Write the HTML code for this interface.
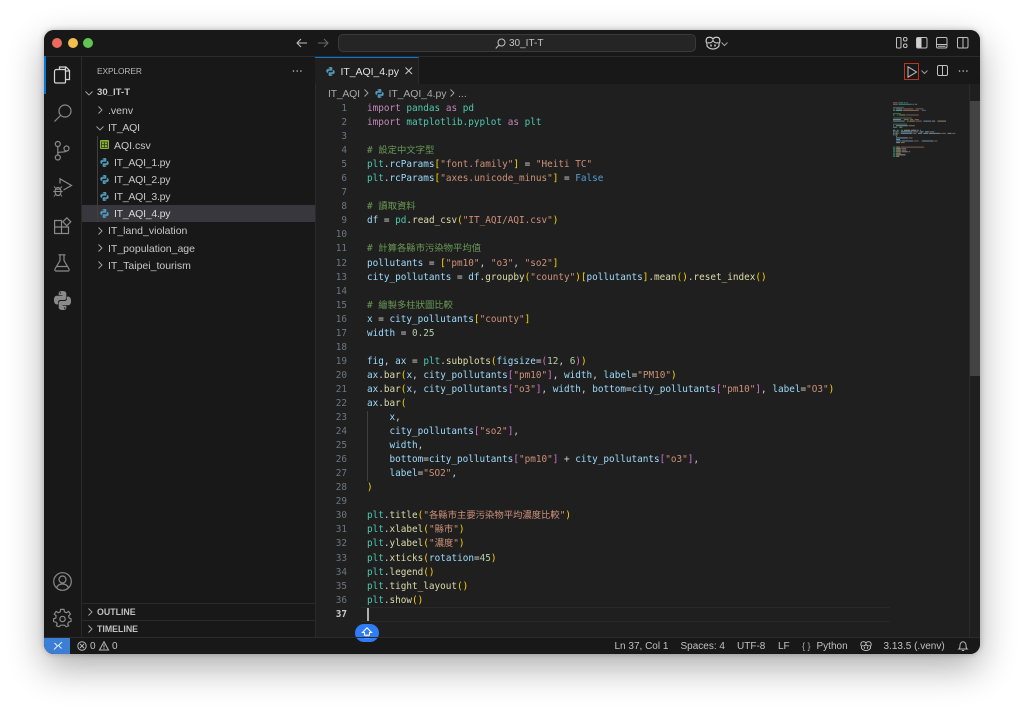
<!DOCTYPE html>
<html lang="en"><head><meta charset="utf-8"><title>30_IT-T</title>
<style>
*{box-sizing:border-box}
html,body{margin:0;width:1024px;height:712px;overflow:hidden;background:#fff}
body{position:relative;font-family:"Liberation Sans","Noto Sans CJK TC",sans-serif}
.win{position:absolute;left:44px;top:30px;width:936px;height:624px;border-radius:10px;background:#181818;box-shadow:0 14px 36px rgba(0,0,0,.32),0 0 6px rgba(0,0,0,.25)}
.a{position:absolute}
svg{position:absolute;overflow:visible;fill:none}
.t{position:absolute;white-space:pre;color:#c8c8c8;font-size:10.5px;line-height:14px}
.fl{letter-spacing:-.25px}
#code,#nums{position:absolute;top:102px;font-family:"DejaVu Sans Mono","Noto Sans CJK TC",monospace;font-size:9.35px}
#code div,#nums div{height:14.05px;line-height:14.05px;white-space:pre}
#code{left:367px;color:#d4d4d4}
#nums{left:320px;width:27px;text-align:right;color:#6e7681}
.k{color:#c586c0}.m{color:#4ec9b0}.v{color:#9cdcfe}.s{color:#ce9178}.f{color:#dcdcaa}.c{color:#6a9955}.n{color:#b5cea8}.y{color:#ffd700}.p{color:#da70d6}.b{color:#569cd6}
</style></head><body>
<svg width="0" height="0" style="position:absolute"><defs>
<g id="py"><path fill="#519aba" d="M7.900 1C5 1 5.100 2.300 5.100 2.300V3.800H8V4.300H3.600S1.500 4 1.500 7.100 3.300 10.100 3.300 10.100H4.400V8.600S4.300 6.800 6.200 6.800H9.100S10.900 6.800 10.900 5.100V2.600S11.200 1 7.900 1ZM6.400 1.900A.5.5 0 1 1 6.400 2.900.5.5 0 0 1 6.400 1.900Z"/><path fill="#519aba" d="M8.100 15C11 15 10.900 13.700 10.900 13.700V12.200H8V11.700H12.400S14.500 12 14.500 8.900 12.700 5.900 12.700 5.900H11.600V7.400S11.700 9.200 9.800 9.200H6.900S5.100 9.200 5.100 10.900V13.400S4.800 15 8.100 15ZM9.600 14.100A.5.5 0 1 1 9.600 13.100.5.5 0 0 1 9.600 14.100Z"/></g>
<path id="cr" d="M.5 .5L4 4 .5 7.500" stroke="#a8a8a8" stroke-width=".9"/>
<path id="cd" d="M.5 .5L4 4 7.500 .5" stroke="#a8a8a8" stroke-width=".9"/>
<g id="cop" stroke="#c8c8c8" stroke-width="1.200"><path d="M2 8.500C.5 7 1 3 3 2.500 5 2 7 2.500 8 4 9 2.500 11 2 13 2.500 15 3 15.500 7 14 8.500V11C12.500 13 10 14 8 14S3.500 13 2 11Z"/><path d="M2.500 7.500C5 8.500 7 7.500 8 5.500 9 7.500 11 8.500 13.500 7.500"/><path d="M6 9.500V11.500M10 9.500V11.500" stroke-width="1.500"/></g>
</defs></svg>

<div class="win"></div>

<div class="a" style="left:44px;top:30px;width:936px;height:624px;border-radius:10px;overflow:hidden;background:#181818">
<div class="a" style="left:-44px;top:-30px;width:1024px;height:712px">

<!-- backgrounds -->
<div class="a" style="left:44px;top:56px;width:936px;height:1px;background:#2b2b2b"></div>
<div class="a" style="left:81px;top:57px;width:1px;height:581px;background:#2b2b2b"></div>
<div class="a" style="left:315px;top:57px;width:1px;height:581px;background:#2b2b2b"></div>
<div class="a" style="left:316px;top:84px;width:664px;height:554px;background:#1f1f1f"></div>
<div class="a" style="left:44px;top:56px;width:2px;height:38px;background:#0078d4"></div>

<!-- traffic lights -->
<div class="a" style="left:52px;top:38px;width:10px;height:10px;border-radius:50%;background:#ed6a5e"></div>
<div class="a" style="left:67.500px;top:38px;width:10px;height:10px;border-radius:50%;background:#f4bf4f"></div>
<div class="a" style="left:83px;top:38px;width:10px;height:10px;border-radius:50%;background:#61c554"></div>

<!-- title bar -->
<svg style="left:296px;top:38px" width="12" height="10"><path d="M11 5H1M5 1L1 5 5 9" stroke="#c0c0c0"/></svg>
<svg style="left:317px;top:38px" width="12" height="10"><path d="M1 5H11M7 1L11 5 7 9" stroke="#6a6a6a"/></svg>
<div class="a" style="left:338px;top:34px;width:358px;height:18px;border-radius:5px;background:#252525;border:1px solid #3a3a3a"></div>
<svg style="left:495px;top:38px" width="11" height="11"><circle cx="6.500" cy="4.500" r="3.500" stroke="#c0c0c0"/><path d="M4 7L.8 10.500" stroke="#c0c0c0"/></svg>
<div class="t" style="left:509px;top:36.500px;font-size:10px;color:#c4c4c4">30_IT-T</div>
<svg style="left:705px;top:35px" width="16" height="16"><use href="#cop"/></svg>
<svg style="left:721px;top:41.500px" width="8" height="5"><path d="M.5.500L3.500 3.500 6.500.500" stroke="#a0a0a0"/></svg>

<svg style="left:896px;top:37px" width="12" height="12"><rect x=".5" y=".5" width="4.500" height="10.500" rx="1" stroke="#c0c0c0"/><rect x="7.500" y=".5" width="3.500" height="3.500" rx="1.500" stroke="#c0c0c0"/><rect x="7.500" y="7" width="3.500" height="3.500" rx="1.500" stroke="#c0c0c0"/></svg>
<svg style="left:916px;top:37px" width="12" height="12"><rect x=".5" y=".5" width="10.500" height="10.500" rx="1.500" stroke="#c0c0c0"/><rect x="1" y="1" width="4.500" height="9.500" fill="#d0d0d0"/></svg>
<svg style="left:936px;top:37px" width="12" height="12"><rect x=".5" y=".5" width="10.500" height="10.500" rx="1.500" stroke="#c0c0c0"/><path d="M.5 7.500H11M2 9.200H9.500" stroke="#c0c0c0"/></svg>
<svg style="left:956.500px;top:37px" width="12" height="12"><rect x=".5" y=".5" width="10.500" height="10.500" rx="1.500" stroke="#c0c0c0"/><path d="M6 .5V11" stroke="#c0c0c0"/></svg>

<!-- activity bar -->
<svg style="left:53px;top:66px" width="18" height="18"><path d="M6.500 3.500V1H13L16.500 4.500V13.500H12.500" stroke="#d4d4d4" stroke-width="1.200"/><path d="M12.500 1V5H16.500" stroke="#d4d4d4" stroke-width="1.200"/><path d="M1.500 5.500C1.500 4 2.500 3.500 3.500 3.500H11.500C12 3.500 12.500 4 12.500 4.500V16C12.500 16.500 12 17 11.500 17H3C2 17 1.500 16.500 1.500 15.500Z" stroke="#d4d4d4" stroke-width="1.200"/></svg>
<svg style="left:53.500px;top:104px" width="18" height="18"><circle cx="11" cy="7" r="6" stroke="#8a8a8a" stroke-width="1.200"/><path d="M6.500 11.500L.5 17.500" stroke="#8a8a8a" stroke-width="1.200"/></svg>
<svg style="left:54px;top:141px" width="16" height="20"><circle cx="3.800" cy="3" r="2.500" stroke="#8a8a8a" stroke-width="1.200"/><circle cx="3.800" cy="16.500" r="2.500" stroke="#8a8a8a" stroke-width="1.200"/><circle cx="12.500" cy="7.500" r="2.500" stroke="#8a8a8a" stroke-width="1.200"/><path d="M3.800 5.500V14M3.800 12.500C4 10 11 12 12.500 10" stroke="#8a8a8a" stroke-width="1.200"/></svg>
<svg style="left:53px;top:178px" width="20" height="20"><path d="M7 5.500V.8L18.500 7.500 10.500 12" stroke="#8a8a8a" stroke-width="1.200"/><ellipse cx="5" cy="13.500" rx="3" ry="4" stroke="#8a8a8a" stroke-width="1.200"/><path d="M2.500 10L1 8.500M7.500 10L9 8.500M.3 13.500H9.700M1 18.500L2.500 16.500M9 18.500L7.500 16.500M2.500 11.200H7.500" stroke="#8a8a8a"/></svg>
<svg style="left:54px;top:217px" width="18" height="18"><path d="M.6 3.500H7.500V16.500H.6ZM.6 10H14.500V16.500H7.500" stroke="#8a8a8a" stroke-width="1.200"/><path d="M12.800 .8L16.800 4.800 12.800 8.800 8.800 4.800Z" stroke="#8a8a8a" stroke-width="1.200"/></svg>
<svg style="left:54px;top:254px" width="16" height="18"><path d="M4.500 .8H11.500M6 .8V6.500L1 15C.5 16 1 17 2 17H14C15 17 15.500 16 15 15L10 6.500V.8M3 12.500H13" stroke="#8a8a8a" stroke-width="1.200"/></svg>
<svg style="left:52.500px;top:290.500px" width="19" height="19" viewBox="0 0 16 16"><path fill="#8a8a8a" d="M7.900 0C4.700 0 4.800 1.500 4.800 1.500V3.500H8V4H3.300S.8 3.700.8 7.500 3 11.300 3 11.300H4.300V9.500S4.200 7.600 6.200 7.600H9.300S11.200 7.600 11.200 5.700V2.200S11.500 0 7.900 0ZM6.200 1A.6.6 0 1 1 6.200 2.200.6.6 0 0 1 6.200 1Z"/><path fill="#8a8a8a" d="M8.100 16C11.300 16 11.200 14.500 11.200 14.500V12.500H8V12H12.700S15.200 12.300 15.200 8.500 13 4.700 13 4.700H11.700V6.500S11.800 8.400 9.800 8.400H6.700S4.800 8.400 4.800 10.300V13.800S4.500 16 8.100 16ZM9.800 15A.6.6 0 1 1 9.800 13.800.6.6 0 0 1 9.800 15Z"/></svg>
<svg style="left:53px;top:571.500px" width="19" height="19"><circle cx="9.500" cy="9.500" r="8.800" stroke="#8a8a8a" stroke-width="1.200"/><circle cx="9.500" cy="7.500" r="3.500" stroke="#8a8a8a" stroke-width="1.200"/><path d="M3.500 16C4.500 13 6.500 12 9.500 12S14.500 13 15.500 16" stroke="#8a8a8a" stroke-width="1.200"/></svg>
<svg style="left:53px;top:608.500px" width="19" height="19"><path d="M7.800 .7H11.200L11.700 3.200 13.700 4.100 15.900 2.800 17.800 5.500 16 7.200 16.400 9.500 18.400 10.300V13L16 13.600 15 15.500 15.900 17.500 13.500 18.400 11.700 16.800H8L6.200 18.400 3.500 17.500 4.300 15.200 3 13.700.6 13V10.300L2.900 9.500 3.200 7.200 1.300 5.500 3.200 2.800 5.500 4.100 7.400 3.200Z" transform="translate(0 -.3) scale(.98)" stroke="#8a8a8a" stroke-width="1.200"/><circle cx="9.500" cy="10" r="2.700" stroke="#8a8a8a" stroke-width="1.200"/></svg>

<!-- sidebar -->
<div class="t" style="left:97px;top:64px;font-size:8.400px;color:#b8b8b8;letter-spacing:-.1px">EXPLORER</div>
<svg style="left:292px;top:70px" width="11" height="2"><circle cx="1.500" cy="1" r=".8" fill="#c0c0c0"/><circle cx="5.200" cy="1" r=".8" fill="#c0c0c0"/><circle cx="8.900" cy="1" r=".8" fill="#c0c0c0"/></svg>
<div class="a" style="left:82px;top:205px;width:233px;height:17.300px;background:#37373d"></div>
<div class="a" style="left:97px;top:136px;width:1px;height:86px;background:#404040"></div>

<svg style="left:85px;top:91px" width="8" height="5"><use href="#cd"/></svg>
<div class="t" style="left:97px;top:86px;font-size:9.600px;font-weight:bold;color:#c8c8c8">30_IT-T</div>

<svg style="left:98px;top:106px" width="5" height="8"><use href="#cr"/></svg>
<div class="t" style="left:108px;top:104px">.venv</div>
<svg style="left:96px;top:125.500px" width="8" height="5"><use href="#cd"/></svg>
<div class="t fl" style="left:108px;top:121px">IT_AQI</div>

<svg style="left:100px;top:140px" width="9" height="9"><rect width="9" height="9" rx="1" fill="#8bb33c"/><path d="M1.500 2H7.500V7.500H1.500ZM4.500 2V7.500M1.500 4.700H7.500" stroke="#2d3a14" stroke-width=".8"/></svg>
<div class="t" style="left:114px;top:139px">AQI.csv</div>
<svg style="left:100px;top:157.500px" width="9" height="9" viewBox="1 1 14 14"><use href="#py"/></svg>
<div class="t fl" style="left:114px;top:156px">IT_AQI_1.py</div>
<svg style="left:100px;top:174.500px" width="9" height="9" viewBox="1 1 14 14"><use href="#py"/></svg>
<div class="t fl" style="left:114px;top:173px">IT_AQI_2.py</div>
<svg style="left:100px;top:191.500px" width="9" height="9" viewBox="1 1 14 14"><use href="#py"/></svg>
<div class="t fl" style="left:114px;top:190px">IT_AQI_3.py</div>
<svg style="left:100px;top:209px" width="9" height="9" viewBox="1 1 14 14"><use href="#py"/></svg>
<div class="t fl" style="left:114px;top:207px;color:#d8d8d8">IT_AQI_4.py</div>

<svg style="left:98px;top:226.500px" width="5" height="8"><use href="#cr"/></svg>
<div class="t" style="left:108px;top:224px">IT_land_violation</div>
<svg style="left:98px;top:244px" width="5" height="8"><use href="#cr"/></svg>
<div class="t" style="left:108px;top:242px">IT_population_age</div>
<svg style="left:98px;top:261px" width="5" height="8"><use href="#cr"/></svg>
<div class="t" style="left:108px;top:259px">IT_Taipei_tourism</div>

<div class="a" style="left:82px;top:603px;width:233px;height:1px;background:#2b2b2b"></div>
<div class="a" style="left:82px;top:620px;width:233px;height:1px;background:#2b2b2b"></div>
<svg style="left:87.500px;top:607.500px" width="5" height="8"><use href="#cr"/></svg>
<div class="t" style="left:97px;top:604.500px;font-size:8.800px;font-weight:bold;color:#c0c0c0">OUTLINE</div>
<svg style="left:87.500px;top:624.500px" width="5" height="8"><use href="#cr"/></svg>
<div class="t" style="left:97px;top:621.500px;font-size:8.800px;font-weight:bold;color:#c0c0c0">TIMELINE</div>

<!-- tab -->
<div class="a" style="left:315px;top:57px;width:104px;height:27px;background:#1f1f1f;border-top:1px solid #0078d4;border-right:1px solid #2b2b2b"></div>
<svg style="left:326px;top:66.500px" width="9" height="9" viewBox="1 1 14 14"><use href="#py"/></svg>
<div class="t" style="left:340.500px;top:65px;color:#e2e2e2;letter-spacing:-.05px">IT_AQI_4.py</div>
<svg style="left:404.500px;top:67px" width="8" height="8"><path d="M.5.500L7 7M7 .5L.5 7" stroke="#c8c8c8"/></svg>

<!-- editor actions -->
<div class="a" style="left:904px;top:62.500px;width:15px;height:17.500px;border:1px solid #c0341d"></div>
<svg style="left:907px;top:65.500px" width="10" height="12"><path d="M1 .8V11.200L9.500 6Z" stroke="#c0c0c0"/></svg>
<svg style="left:921px;top:69.500px" width="7" height="4"><path d="M.5.500L3.500 3.500 6.500.500" stroke="#9a9a9a"/></svg>
<svg style="left:937px;top:65px" width="12" height="12"><rect x=".5" y=".5" width="10" height="10" rx="1.500" stroke="#c0c0c0"/><path d="M5.500 .5V10.500" stroke="#c0c0c0"/></svg>
<svg style="left:957.500px;top:70px" width="11" height="2"><circle cx="1.500" cy="1" r=".8" fill="#c0c0c0"/><circle cx="5.200" cy="1" r=".8" fill="#c0c0c0"/><circle cx="8.900" cy="1" r=".8" fill="#c0c0c0"/></svg>

<!-- breadcrumbs -->
<div class="t" style="left:328px;top:87px;color:#a8a8a8;letter-spacing:-.25px">IT_AQI</div>
<svg style="left:364px;top:89px" width="5" height="8"><use href="#cr"/></svg>
<svg style="left:374.500px;top:88.500px" width="9" height="9" viewBox="1 1 14 14"><use href="#py"/></svg>
<div class="t" style="left:388.500px;top:87px;color:#a8a8a8;letter-spacing:-.1px">IT_AQI_4.py</div>
<svg style="left:450px;top:89px" width="5" height="8"><use href="#cr"/></svg>
<div class="t" style="left:458px;top:87px;color:#a8a8a8">...</div>

<!-- indent guides, current line -->
<div class="a" style="left:367px;top:411px;width:1px;height:70px;background:#404040"></div>
<div class="a" style="left:361px;top:607px;width:529px;height:1px;background:#282828"></div>
<div class="a" style="left:361px;top:621px;width:529px;height:1px;background:#282828"></div>

<div id="nums"><div>1</div><div>2</div><div>3</div><div>4</div><div>5</div><div>6</div><div>7</div><div>8</div><div>9</div><div>10</div><div>11</div><div>12</div><div>13</div><div>14</div><div>15</div><div>16</div><div>17</div><div>18</div><div>19</div><div>20</div><div>21</div><div>22</div><div>23</div><div>24</div><div>25</div><div>26</div><div>27</div><div>28</div><div>29</div><div>30</div><div>31</div><div>32</div><div>33</div><div>34</div><div>35</div><div>36</div><div style="color:#cccccc;font-weight:bold">37</div></div>

<div id="code">
<div><span class="k">import</span> <span class="m">pandas</span> <span class="k">as</span> <span class="m">pd</span></div>
<div><span class="k">import</span> <span class="m">matplotlib.pyplot</span> <span class="k">as</span> <span class="m">plt</span></div>
<div></div>
<div><span class="c"># 設定中文字型</span></div>
<div><span class="m">plt</span>.<span class="v">rcParams</span><span class="y">[</span><span class="s">"font.family"</span><span class="y">]</span> = <span class="s">"Heiti TC"</span></div>
<div><span class="m">plt</span>.<span class="v">rcParams</span><span class="y">[</span><span class="s">"axes.unicode_minus"</span><span class="y">]</span> = <span class="b">False</span></div>
<div></div>
<div><span class="c"># 讀取資料</span></div>
<div><span class="v">df</span> = <span class="m">pd</span>.<span class="f">read_csv</span><span class="y">(</span><span class="s">"IT_AQI/AQI.csv"</span><span class="y">)</span></div>
<div></div>
<div><span class="c"># 計算各縣市污染物平均值</span></div>
<div><span class="v">pollutants</span> = <span class="y">[</span><span class="s">"pm10"</span>, <span class="s">"o3"</span>, <span class="s">"so2"</span><span class="y">]</span></div>
<div><span class="v">city_pollutants</span> = <span class="v">df</span>.<span class="f">groupby</span><span class="y">(</span><span class="s">"county"</span><span class="y">)[</span><span class="v">pollutants</span><span class="y">]</span>.<span class="f">mean</span><span class="y">()</span>.<span class="f">reset_index</span><span class="y">()</span></div>
<div></div>
<div><span class="c"># 繪製多柱狀圖比較</span></div>
<div><span class="v">x</span> = <span class="v">city_pollutants</span><span class="y">[</span><span class="s">"county"</span><span class="y">]</span></div>
<div><span class="v">width</span> = <span class="n">0.25</span></div>
<div></div>
<div><span class="v">fig</span>, <span class="v">ax</span> = <span class="m">plt</span>.<span class="f">subplots</span><span class="y">(</span><span class="v">figsize</span>=<span class="p">(</span><span class="n">12</span>, <span class="n">6</span><span class="p">)</span><span class="y">)</span></div>
<div><span class="v">ax</span>.<span class="f">bar</span><span class="y">(</span><span class="v">x</span>, <span class="v">city_pollutants</span><span class="p">[</span><span class="s">"pm10"</span><span class="p">]</span>, <span class="v">width</span>, <span class="v">label</span>=<span class="s">"PM10"</span><span class="y">)</span></div>
<div><span class="v">ax</span>.<span class="f">bar</span><span class="y">(</span><span class="v">x</span>, <span class="v">city_pollutants</span><span class="p">[</span><span class="s">"o3"</span><span class="p">]</span>, <span class="v">width</span>, <span class="v">bottom</span>=<span class="v">city_pollutants</span><span class="p">[</span><span class="s">"pm10"</span><span class="p">]</span>, <span class="v">label</span>=<span class="s">"O3"</span><span class="y">)</span></div>
<div><span class="v">ax</span>.<span class="f">bar</span><span class="y">(</span></div>
<div>    <span class="v">x</span>,</div>
<div>    <span class="v">city_pollutants</span><span class="p">[</span><span class="s">"so2"</span><span class="p">]</span>,</div>
<div>    <span class="v">width</span>,</div>
<div>    <span class="v">bottom</span>=<span class="v">city_pollutants</span><span class="p">[</span><span class="s">"pm10"</span><span class="p">]</span> + <span class="v">city_pollutants</span><span class="p">[</span><span class="s">"o3"</span><span class="p">]</span>,</div>
<div>    <span class="v">label</span>=<span class="s">"SO2"</span>,</div>
<div><span class="y">)</span></div>
<div></div>
<div><span class="m">plt</span>.<span class="f">title</span><span class="y">(</span><span class="s">"各縣市主要污染物平均濃度比較"</span><span class="y">)</span></div>
<div><span class="m">plt</span>.<span class="f">xlabel</span><span class="y">(</span><span class="s">"縣市"</span><span class="y">)</span></div>
<div><span class="m">plt</span>.<span class="f">ylabel</span><span class="y">(</span><span class="s">"濃度"</span><span class="y">)</span></div>
<div><span class="m">plt</span>.<span class="f">xticks</span><span class="y">(</span><span class="v">rotation</span>=<span class="n">45</span><span class="y">)</span></div>
<div><span class="m">plt</span>.<span class="f">legend</span><span class="y">()</span></div>
<div><span class="m">plt</span>.<span class="f">tight_layout</span><span class="y">()</span></div>
<div><span class="m">plt</span>.<span class="f">show</span><span class="y">()</span></div>
<div></div>
</div>
<div class="a" style="left:367px;top:608px;width:1.500px;height:13px;background:#aeafad"></div>

<!-- minimap: 0.78px per column, 1.53px per line -->
<svg style="left:893px;top:101.500px;opacity:.55" width="70" height="60">
<g transform="scale(.78 1.53)" stroke-width=".7">
<path stroke="#c586c0" d="M0 .5h6M14 .5h2M0 1.500h6M25 1.500h2"/>
<path stroke="#4ec9b0" d="M7 .5h6M17 .5h2M7 1.500h17M28 1.500h3M0 4.500h3M0 5.500h3M5 8.500h2M10 18.500h3M0 29.500h3M0 30.500h3M0 31.500h3M0 32.500h3M0 33.500h3M0 34.500h3M0 35.500h3"/>
<path stroke="#6a9955" d="M0 3.500h14M0 7.500h10M0 10.500h24M0 14.500h18"/>
<path stroke="#9cdcfe" d="M4 4.500h8M4 5.500h8M0 8.500h2M0 11.500h10M0 12.500h15M18 12.500h2M39 12.500h10M0 15.500h1M4 15.500h15M0 16.500h5M0 18.500h3M5 18.500h2M23 18.500h7M0 19.500h2M7 19.500h1M10 19.500h15M34 19.500h5M41 19.500h5M0 20.500h2M7 20.500h1M10 20.500h15M32 20.500h5M39 20.500h6M46 20.500h15M70 20.500h5M0 21.500h2M4 22.500h1M4 23.500h15M4 24.500h5M4 25.500h6M11 25.500h15M37 25.500h15M4 26.500h5M11 32.500h8"/>
<path stroke="#ce9178" d="M13 4.500h13M29 4.500h10M13 5.500h20M17 8.500h16M14 11.500h6M22 11.500h4M28 11.500h5M29 12.500h8M20 15.500h8M26 19.500h6M47 19.500h6M26 20.500h4M62 20.500h6M76 20.500h4M20 23.500h5M27 25.500h6M53 25.500h4M10 26.500h5M10 29.500h30M11 30.500h6M11 31.500h6"/>
<path stroke="#dcdcaa" d="M8 8.500h8M21 12.500h7M50 12.500h4M57 12.500h11M14 18.500h8M3 19.500h3M3 20.500h3M3 21.500h3M4 29.500h5M4 30.500h6M4 31.500h6M4 32.500h6M4 33.500h6M4 34.500h12M4 35.500h4"/>
<path stroke="#569cd6" d="M37 5.500h5"/>
<path stroke="#b5cea8" d="M8 16.500h4M31 18.500h2M35 18.500h1M20 32.500h2"/>
</g>
</svg>

<!-- scrollbar -->
<div class="a" style="left:969px;top:84px;width:1px;height:554px;background:#2b2b2b"></div>
<div class="a" style="left:969.500px;top:101px;width:10.500px;height:275px;background:#434343"></div>

<!-- floating blue button -->
<div class="a" style="left:355px;top:624px;width:24px;height:18px;border-radius:9px;background:#2f7cf6"></div>
<svg style="left:361px;top:627px" width="12" height="12"><path d="M6 .8L10.500 5.500H8.500V8.200H3.500V5.500H1.500Z" stroke="#fff" stroke-width="1.100"/><path d="M3.500 10.500H8.500" stroke="#fff" stroke-width="1.300"/></svg>

<!-- status bar -->
<div class="a" style="left:44px;top:637px;width:936px;height:1px;background:#2b2b2b"></div>
<div class="a" style="left:44px;top:638px;width:26px;height:16px;background:#3a7fd5"></div>
<svg style="left:53px;top:641px" width="10" height="10"><path d="M1 8.500L4.500 5 1.500 2M9 1L5.500 4.500 8.500 7.500" stroke="#e8f0fa"/></svg>
<svg style="left:77px;top:641px" width="10" height="10"><circle cx="5" cy="5" r="4.200" stroke="#b8b8b8"/><path d="M3 3L7 7M7 3L3 7" stroke="#b8b8b8"/></svg>
<div class="t" style="left:90px;top:640px;font-size:10px;color:#c0c0c0">0</div>
<svg style="left:99px;top:641px" width="10" height="10"><path d="M5 .8L9.500 9H.5Z" stroke="#b8b8b8"/><path d="M5 3.500V6.500M5 7.200V8" stroke="#b8b8b8"/></svg>
<div class="t" style="left:112px;top:640px;font-size:10px;color:#c0c0c0">0</div>

<div class="t" style="left:614.500px;top:640px;font-size:10px;color:#c0c0c0">Ln 37, Col 1</div>
<div class="t" style="left:680.500px;top:640px;font-size:10px;color:#c0c0c0">Spaces: 4</div>
<div class="t" style="left:737px;top:640px;font-size:10px;color:#c0c0c0">UTF-8</div>
<div class="t" style="left:778px;top:640px;font-size:10px;color:#c0c0c0">LF</div>
<div class="t" style="left:802px;top:639px;font-size:9px;color:#a8a8a8">{ }</div>
<div class="t" style="left:816.500px;top:640px;font-size:10px;color:#c0c0c0">Python</div>
<svg style="left:860px;top:640px" width="12" height="12" viewBox="0 0 16 16"><use href="#cop"/></svg>
<div class="t" style="left:883.500px;top:640px;font-size:10px;color:#c0c0c0">3.13.5 (.venv)</div>
<svg style="left:958px;top:641px" width="10" height="11"><path d="M.8 8C2 7 2 6 2 4.500 2 2.500 3.200 .8 5 .8S8 2.500 8 4.500C8 6 8 7 9.200 8ZM3.800 9.500H6.200" stroke="#b8b8b8"/></svg>

</div></div>
</body></html>
